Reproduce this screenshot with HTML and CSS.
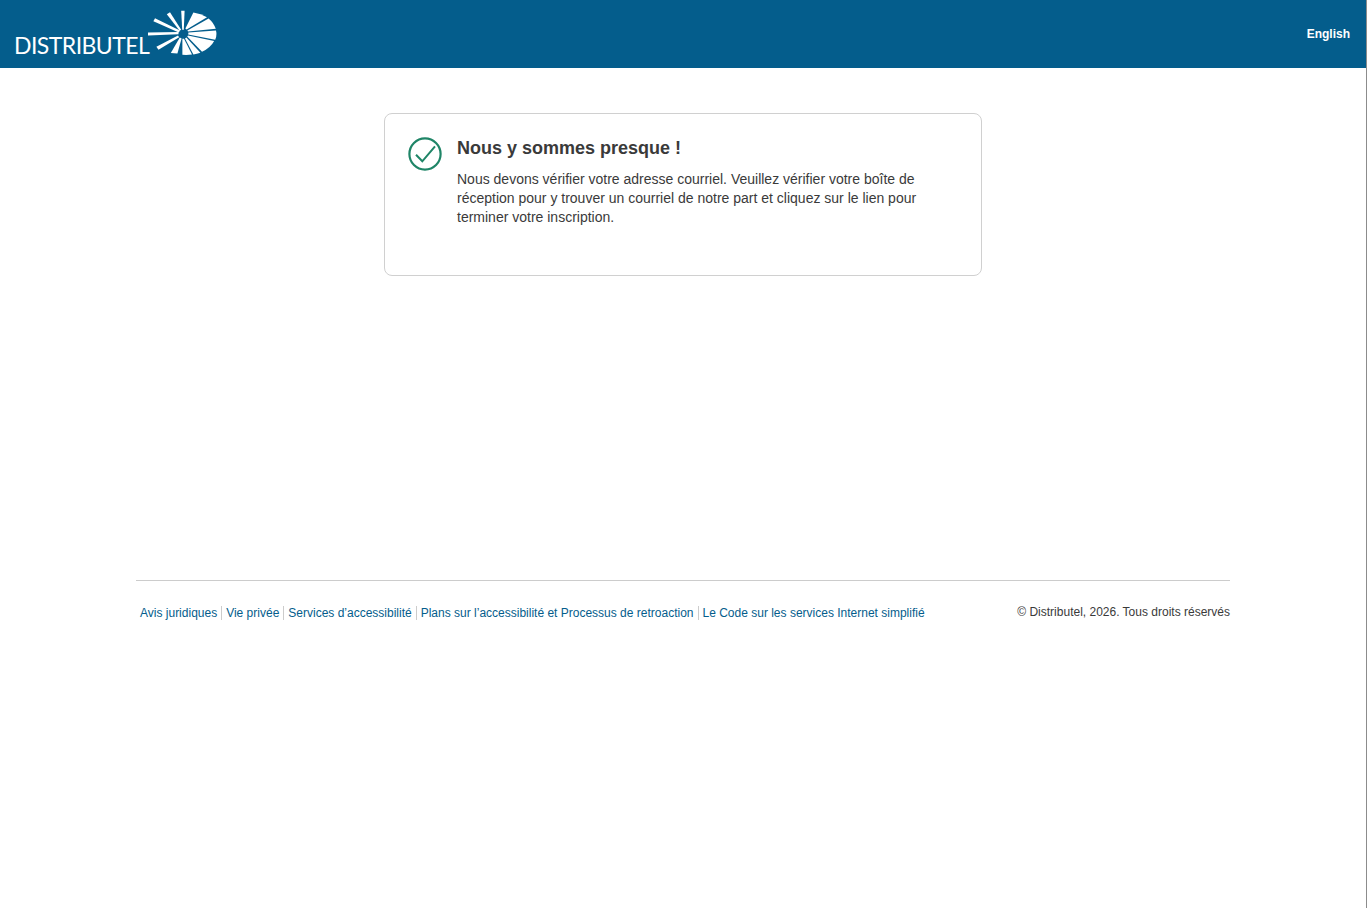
FILE: index.html
```html
<!DOCTYPE html>
<html lang="fr">

<head>
    <meta charset="UTF-8">
    <meta name="viewport" content="width=device-width, initial-scale=1.0">
    <title>Distributel - Inscription</title>
    <link rel="stylesheet" href="styles.css">
</head>

<body>
    <header class="topbar">
        <a class="logo" href="#">
            <span class="logo-name">DISTRIBUTEL</span>
            <svg class="logo-sun" width="72" height="48" viewBox="145 9 72 48">
                <g fill="#fff">
                    <path d="M148 32.4 L178.5 32 L178.5 34.2 L148 35.6 Z" />
                    <path d="M155 18.2 L180 30.6 L178.8 32.6 L153.4 21.2 Z" />
                    <path d="M170 12.2 L181.2 29.8 L179.6 30.8 L166.8 14.2 Z" />
                    <path d="M181.2 10.8 L184.6 10.8 L183.8 29.8 L182.2 29.8 Z" />
                    <path d="M178 35.4 L179.2 37.2 L158.5 49.8 L156.4 46.8 Z" />
                    <path d="M179.8 37.4 L181.6 38.4 L177.4 53.6 L170.8 53 Z" />
                    <path d="M182.4 38.8 L184 38.8 L192 54.6 Q187 55.2 182.4 54.8 Z" />
                    <path d="M185 38.4 L186.4 37.4 L200.4 52.8 Q197 54 193.4 54.4 Z" />
                    <path d="M187.2 36.6 L188 35.4 L214.2 41 Q210.5 47.8 202 51.8 Z" />
                    <path d="M188.2 34.4 L188.4 32.6 L216 30.4 Q217.2 35 215.2 39.8 Z" />
                    <path d="M188 31.4 L187.4 30.4 L208.6 18.4 Q213.6 22.5 215.8 28.8 Z" />
                    <path d="M186.6 29.4 L185.4 28.6 L193.4 12.4 Q201 13.4 207 17.2 Z" />
                </g>
            </svg>
        </a>
        <a class="lang" href="#">English</a>
    </header>

    <main class="content">
        <section class="card">
            <svg class="check" width="34" height="34" viewBox="0 0 34 34">
                <circle cx="17" cy="17" r="15.6" fill="none" stroke="#1f8567" stroke-width="2.2" />
                <path d="M8 17.7 L14.3 24.3 L27 9.3" fill="none" stroke="#1f8567" stroke-width="2" />
            </svg>
            <div class="card-text">
                <h1>Nous y sommes presque !</h1>
                <p>Nous devons vérifier votre adresse courriel. Veuillez vérifier votre boîte de réception pour y trouver un courriel de notre part et cliquez sur le lien pour terminer votre inscription.</p>
            </div>
        </section>
    </main>

    <footer class="footer">
        <nav class="footer-links">
            <a href="#">Avis juridiques</a>
            <a href="#">Vie privée</a>
            <a href="#">Services d’accessibilité</a>
            <a href="#">Plans sur l’accessibilité et Processus de retroaction</a>
            <a href="#">Le Code sur les services Internet simplifié</a>
        </nav>
        <p class="copyright">© Distributel, 2026. Tous droits réservés</p>
    </footer>
</body>

</html>
```

FILE: styles.css
```css
html {
    background-color: #fff;
}

body {
    font-family: "Liberation Sans", Arial, sans-serif;
    color: #3a3a3a;
    margin: 0;
    min-height: 908px;
    box-sizing: border-box;
    border-right: 1px solid #8c8c8c;
}

a {
    text-decoration: none;
}

.topbar {
    height: 68px;
    background-color: #045d8c;
    display: flex;
    justify-content: space-between;
    align-items: flex-start;
}

.logo {
    display: flex;
    align-items: flex-start;
    color: #fff;
    padding: 9px 0 0 14px;
}

.logo-name {
    font-family: "Lato", sans-serif;
    font-weight: 400;
    font-size: 23px;
    line-height: 23px;
    letter-spacing: -0.55px;
    margin-top: 25px;
    width: 131px;
    white-space: nowrap;
}

.lang {
    color: #fff;
    font-size: 12px;
    font-weight: bold;
    line-height: 14px;
    margin: 27px 16px 0 0;
}

.content {
    display: flex;
    justify-content: center;
    padding-top: 45px;
    height: 512px;
    box-sizing: border-box;
}

.card {
    width: 598px;
    height: 163px;
    box-sizing: border-box;
    border: 1px solid #d0d0d0;
    border-radius: 8px;
    display: flex;
    align-items: flex-start;
    gap: 15px;
    padding: 23px 23px 0 23px;
}

.card-text {
    flex: 1;
}

.card h1 {
    font-size: 18px;
    line-height: 22px;
    margin: 0 0 11px;
}

.card p {
    font-size: 14px;
    line-height: 19px;
    margin: 0;
}

.footer {
    margin: 0 136px;
    height: 60px;
    border-top: 1px solid #ccc;
    display: flex;
    justify-content: space-between;
    align-items: flex-start;
    padding-top: 25px;
    font-size: 12px;
    line-height: 14px;
    box-sizing: content-box;
    width: 1094px;
}

.footer-links {
    display: flex;
    padding-left: 4px;
}

.footer-links a {
    color: #045d8c;
    padding-right: 4px;
    margin-right: 4px;
    border-right: 1px solid #ccc;
}

.footer-links a:last-child {
    border-right: none;
}

.copyright {
    margin: -1px 0 0;
}
```
